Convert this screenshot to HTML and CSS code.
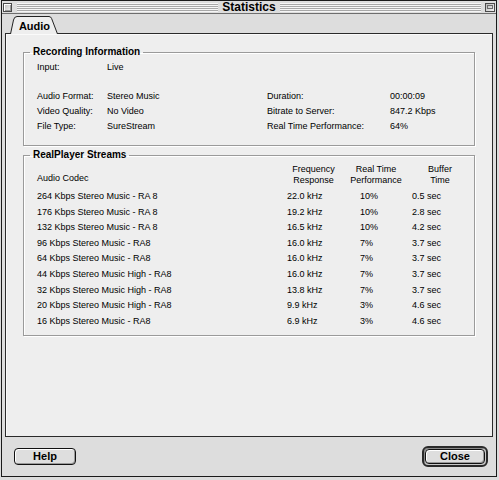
FILE: index.html
```html
<!DOCTYPE html>
<html>
<head>
<meta charset="utf-8">
<title>Statistics</title>
<link rel="stylesheet" href="styles.css">
</head>
<body>
<div class="window">
  <div class="titlebar">
    <span class="closebox"></span>
    <span class="stripes"></span>
    <span class="title">Statistics</span>
    <span class="stripes"></span>
    <span class="zoombox"><span class="zoominner"></span></span>
  </div>
  <div class="tabrow">
    <div class="tab">
      <svg class="tabshape" width="48" height="18" viewBox="0 0 48 18">
        <path d="M0.5 18 L3.5 4 Q4.3 0.5 7 0.5 L39 0.5 Q40.8 0.5 41.6 2.5 L47.5 18" fill="#eeeeee" stroke="#222" stroke-width="1"/>
      </svg>
      <span class="tablabel">Audio</span>
    </div>
  </div>
  <div class="panel">
    <fieldset class="group rec">
      <legend>Recording Information</legend>
      <div class="recgrid">
        <span>Input:</span><span>Live</span><span></span><span></span>
        <span></span><span></span><span></span><span></span>
        <span>Audio Format:</span><span>Stereo Music</span><span>Duration:</span><span>00:00:09</span>
        <span>Video Quality:</span><span>No Video</span><span>Bitrate to Server:</span><span>847.2 Kbps</span>
        <span>File Type:</span><span>SureStream</span><span>Real Time Performance:</span><span>64%</span>
      </div>
    </fieldset>
    <fieldset class="group streams">
      <legend>RealPlayer Streams</legend>
      <div class="sgrid">
        <span class="h hcodec">Audio Codec</span>
        <span class="h">Frequency<br>Response</span>
        <span class="h">Real Time<br>Performance</span>
        <span class="h">Buffer<br>Time</span>

        <span class="d">264 Kbps Stereo Music - RA 8</span><span class="d">22.0 kHz</span><span class="d rt">10%</span><span class="d">0.5 sec</span>
        <span class="d">176 Kbps Stereo Music - RA 8</span><span class="d">19.2 kHz</span><span class="d rt">10%</span><span class="d">2.8 sec</span>
        <span class="d">132 Kbps Stereo Music - RA 8</span><span class="d">16.5 kHz</span><span class="d rt">10%</span><span class="d">4.2 sec</span>
        <span class="d">96 Kbps Stereo Music - RA8</span><span class="d">16.0 kHz</span><span class="d rt">7%</span><span class="d">3.7 sec</span>
        <span class="d">64 Kbps Stereo Music - RA8</span><span class="d">16.0 kHz</span><span class="d rt">7%</span><span class="d">3.7 sec</span>
        <span class="d">44 Kbps Stereo Music High - RA8</span><span class="d">16.0 kHz</span><span class="d rt">7%</span><span class="d">3.7 sec</span>
        <span class="d">32 Kbps Stereo Music High - RA8</span><span class="d">13.8 kHz</span><span class="d rt">7%</span><span class="d">3.7 sec</span>
        <span class="d">20 Kbps Stereo Music High - RA8</span><span class="d">9.9 kHz</span><span class="d rt">3%</span><span class="d">4.6 sec</span>
        <span class="d">16 Kbps Stereo Music - RA8</span><span class="d">6.9 kHz</span><span class="d rt">3%</span><span class="d">4.6 sec</span>
      </div>
    </fieldset>
  </div>
  <div class="buttonrow">
    <button class="btn help">Help</button>
    <span class="defaultring"><button class="btn close">Close</button></span>
  </div>
</div>
</body>
</html>
```

FILE: styles.css
```css
* { box-sizing: border-box; }
html, body { margin: 0; padding: 0; }
body {
  width: 499px;
  height: 480px;
  overflow: hidden;
  background: #dcdcdc;
  font-family: "Liberation Sans", Arial, sans-serif;
  color: #000;
}
.window {
  margin-left: 1px;
  width: 496px;
  height: 477px;
  border: 1px solid #1a1a1a;
  background: #dddddd;
  display: flex;
  flex-direction: column;
}
.titlebar {
  height: 13px;
  flex: none;
  border-bottom: 1px solid #6e6e6e;
  display: flex;
  align-items: center;
  padding: 0 1px 0 1px;
}
.closebox {
  width: 9px;
  height: 9px;
  flex: none;
  border: 1px solid #4a4a4a;
  background: linear-gradient(135deg, #b8b8b8, #f4f4f4);
  box-shadow: inset 1px 1px 0 #fff, inset -1px -1px 0 #999;
  margin-right: 5px;
}
.stripes {
  flex: 1;
  height: 9px;
  background: repeating-linear-gradient(to bottom, #f6f6f6 0 1px, #a8a8a8 1px 2px);
}
.title {
  flex: none;
  padding: 0 4px;
  font-size: 12px;
  font-weight: bold;
  line-height: 12px;
}
.zoombox {
  width: 10px;
  height: 9px;
  flex: none;
  margin-left: 4px;
  border: 1px solid #4a4a4a;
  background: linear-gradient(135deg, #b8b8b8, #f4f4f4);
  display: flex;
  padding: 1px;
}
.zoominner {
  width: 6px;
  height: 4px;
  border: 1px solid #6a6a6a;
}
.tabrow {
  flex: none;
  height: 20px;
  margin-bottom: -1px;
  padding: 2px 0 0 8px;
  display: flex;
}
.tab {
  position: relative;
  z-index: 1;
  width: 48px;
  height: 18px;
  display: flex;
  justify-content: center;
  align-items: center;
}
.tabshape {
  position: absolute;
  left: 0;
  top: 0;
}
.tablabel {
  position: relative;
  font-size: 11px;
  font-weight: bold;
  line-height: 12px;
  margin-top: 1px;
  margin-left: 1px;
}
.panel {
  flex: none;
  margin: 0 3px;
  height: 404px;
  border: 1px solid #2a2a2a;
  background: #eeeeee;
  box-shadow: inset 1px 1px 0 #fafafa;
  padding: 12px 17px 0 17px;
  display: flex;
  flex-direction: column;
}
.group {
  margin: 0;
  border: 1px solid #9a9a9a;
  box-shadow: 1px 1px 0 #fff, inset 1px 1px 0 #fff;
  padding: 0 0 0 13px;
  min-width: 0;
}
.group legend {
  font-size: 10px;
  font-weight: bold;
  line-height: 12px;
  padding: 0 3px;
  margin-left: -7px;
}
.rec {
  padding-top: 2px;
  padding-bottom: 12px;
}
.recgrid {
  display: grid;
  grid-template-columns: 70px 160px 123px 1fr;
  grid-template-rows: 14.5px 14.5px 15px 14.5px 14.5px;
  font-size: 9px;
  line-height: 14.5px;
}
.streams {
  margin-top: 3px;
  padding-top: 3px;
  padding-bottom: 6px;
}
.sgrid {
  display: grid;
  grid-template-columns: 250px 53px 72px 56px;
  font-size: 9px;
}
.h {
  line-height: 11px;
  text-align: center;
  margin-bottom: 3px;
}
.hcodec {
  text-align: left;
  align-self: end;
  margin-bottom: 5px;
}
.d {
  line-height: 15.6px;
  white-space: nowrap;
}
.rt {
  padding-left: 20px;
}
.buttonrow {
  flex: 1;
  display: flex;
  align-items: center;
  justify-content: space-between;
  padding: 0 8px 1px 12px;
}
.btn {
  font-family: "Liberation Sans", Arial, sans-serif;
  font-size: 11px;
  font-weight: bold;
  color: #000;
  border: 1px solid #111;
  border-radius: 4px;
  background: #dedede;
  box-shadow: inset 1px 1px 0 #fff, inset -1px -1px 0 #9a9a9a;
  padding: 0;
  margin: 0;
  line-height: 13px;
}
.help {
  width: 62px;
  height: 17px;
}
.defaultring {
  display: flex;
  width: 66px;
  height: 21px;
  border: 2px solid #2a2a2a;
  border-radius: 6px;
  background: #c8c8c8;
  padding: 1px;
  box-shadow: inset 1px 1px 0 #888;
}
.close {
  flex: 1;
  height: 15px;
}
```
